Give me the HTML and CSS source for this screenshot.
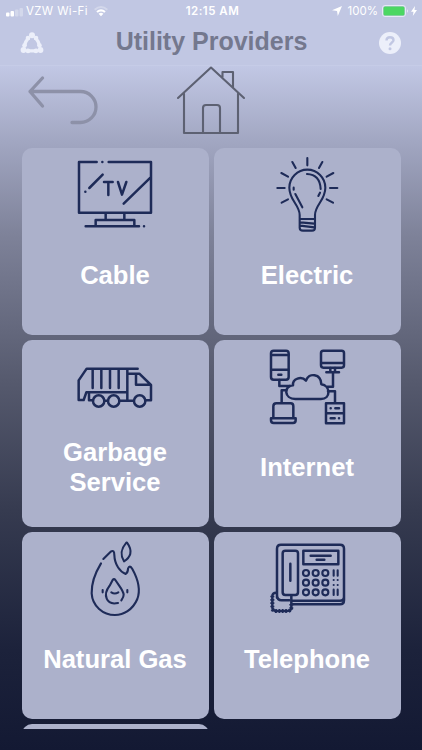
FILE: index.html
```
<!DOCTYPE html>
<html lang="en">

<head>
	<meta charset="utf-8">
	<meta name="viewport" content="width=device-width, initial-scale=1">
	<title>Utility Providers</title>
	<link rel="stylesheet" href="styles.css">
</head>

<body>

	<header>
		<div class="status">
			<div class="status-left">
				<svg class="signal" viewBox="0 0 18 9">
					<rect x="0" y="4.5" width="3.5" height="4" rx="1"/>
					<rect x="4.5" y="3" width="3.5" height="5.5" rx="1"/>
					<rect class="off" x="9" y="1.5" width="3.5" height="7" rx="1"/>
					<rect class="off" x="13.5" y="0" width="3.5" height="8.5" rx="1"/>
				</svg>
				<span class="carrier">VZW Wi-Fi</span>
				<svg class="wifi" viewBox="0 0 14 11">
					<path class="off" d="M0 3Q7-3 14 3L12.600 4.500Q7-.4 1.400 4.500Z"/>
					<path d="M2.300 5.300Q7 1.200 11.700 5.300L10.300 6.800Q7 4 3.700 6.800ZM4.600 7.700Q7 5.900 9.400 7.700L7 10.300Z"/>
				</svg>
			</div>
			<span class="clock">12:15 AM</span>
			<div class="status-right">
				<svg class="location" viewBox="0 0 10 10"><path d="M10 0L5.800 10L5 5L0 4.300Z"/></svg>
				<span class="percent">100%</span>
				<svg class="battery" viewBox="0 0 27 12">
					<rect class="shell" x=".5" y=".5" width="23" height="11" rx="2.500"/>
					<rect class="charge" x="1.500" y="1.500" width="21" height="9" rx="1.500"/>
					<path d="M25 4Q26.500 6 25 8Z"/>
				</svg>
				<svg class="bolt" viewBox="0 0 6 10"><path d="M4 0L0 5.700H2.500L1.800 10L6 4H3.500Z"/></svg>
			</div>
		</div>
		<div class="navbar">
			<svg class="logo" viewBox="0 0 24 22">
				<path d="M9 6Q5 9 4.800 14M15 6Q19 9 19.200 14M7 18.300Q12 19.500 17 18.300"/>
				<circle cx="12" cy="3.200" r="3"/>
				<circle cx="8" cy="6" r="2.300"/>
				<circle cx="16" cy="6" r="2.300"/>
				<circle cx="3.500" cy="18" r="2.900"/>
				<circle cx="20.500" cy="18" r="2.900"/>
				<circle cx="4.500" cy="13.600" r="2.300"/>
				<circle cx="19.500" cy="13.600" r="2.300"/>
				<circle cx="8" cy="18.900" r="2.300"/>
				<circle cx="16" cy="18.900" r="2.300"/>
			</svg>
			<h1>Utility Providers</h1>
			<svg class="help" viewBox="0 0 22 22">
				<circle cx="11" cy="11" r="11"/>
				<path d="M7.500 8.500Q7.500 5.200 11 5.200T14.500 8.200C14.500 10.400 11 10.600 11 13.400"/>
				<circle class="dot" cx="11" cy="16.700" r="1.500"/>
			</svg>
		</div>
	</header>

	<div class="toolbar">
		<svg class="back" viewBox="0 0 72 52"><path d="M15.500 4L3 17.500L15.500 32M3 17.500H53.500A15.500 15.500 0 0 1 53.500 48.500H45"/></svg>
		<svg class="home" viewBox="0 0 70 70"><path d="M2 33L35 2.500L68 33M8 28.500V68H62V28.500M46.500 12V7H57V22M27 68V43Q27 40 30 40H41Q44 40 44 43V68"/></svg>
	</div>

	<main>
		<section class="card">
			<svg class="icon" viewBox="45 24 240 240">
				<path d="M110 51H57V203H273V51H146M127 51h.1M88 129L128 89M76 140h.1M191 176L272 97M137 204V224M193 204V224M107 242V225H223V242M77 244H237M252 244h.1"/>
				<path d="M132 111H158M145 112V150M174 111L186 149L199 111"/>
			</svg>
			<h2>Cable</h2>
		</section>
		<section class="card">
			<svg class="icon" viewBox="21 24 240 240">
				<path class="thin" d="M119 222V210C119 180 88 166 88 128A54 54 0 0 1 196 128C196 166 165 180 165 210V222M119 222H165V248Q165 257 156 257H129Q119 257 119 248ZM121 232L163 236M121 242L163 247"/>
				<path class="thin" d="M142 39V61M97 51L107 69M187 51L177 69M64 84L84 95M220 84L200 95M52 129H74M232 129H210M65 173L84 163M219 173L200 163M141 87Q180 89 182 132M180 143L175 153M101 128V134M106 147L127 187"/>
			</svg>
			<h2>Electric</h2>
		</section>
		<section class="card">
			<svg class="icon" viewBox="45 -15 240 240">
				<path d="M233 56H80L56 91V150H71L79 127H200M98 57V114M124 57V114M150 57V114M176 57V114M202 57V152M203 71H238L273 105V151H258M228 73V104H272M87 128V151H99M133 152H144M178 152H220"/>
				<circle cx="116" cy="153" r="17"/>
				<circle cx="161" cy="153" r="17"/>
				<circle cx="239" cy="153" r="17"/>
			</svg>
			<h2>Garbage<br>Service</h2>
		</section>
		<section class="card">
			<svg class="icon" viewBox="21 15 240 240">
				<rect x="33" y="32" width="53" height="87" rx="8"/>
				<path d="M34 45H85M34 89H85M55 104H64M58 120V138H90M65 188V151H79M219 98V140H202M204 154H225V188"/>
				<rect x="183" y="32" width="69" height="51" rx="7"/>
				<path d="M184 69H251M211 84V97M225 84V97M199 97H237"/>
				<path d="M106 177C72 177 70 137 99 136C97 116 124 107 138 122C146 97 183 100 184 133C212 137 213 177 183 177Z"/>
				<path d="M40 234V199Q40 190 49 190H92Q100 190 100 199V234M33 235H107V241Q107 249 99 249H41Q33 249 33 241Z"/>
				<path d="M198 190H252V250H198ZM198 220H252M212 205h.1M226 205H237M212 235H224M237 235h.1"/>
			</svg>
			<h2>Internet</h2>
		</section>
		<section class="card">
			<svg class="icon" viewBox="15 21 240 240">
				<path class="thin" d="M100 87L122 65Q133 58 133 75C134 105 151 126 167 132Q174 127 174 116Q179 103 187 117C207 153 212 180 202 207C188 240 160 255 135 255C99 255 67 228 65 190C64 154 79 123 93 100"/>
				<path class="thin" d="M169 38C157 52 147 69 162 94C180 83 191 65 171 38ZM144 219C108 227 98 194 119 167L128 150Q132 145 136 150L147 166C166 193 163 198 154 211M98 180V187M172 180V187M124 187Q134 194 145 187"/>
			</svg>
			<h2>Natural Gas</h2>
		</section>
		<section class="card">
			<svg class="icon" viewBox="21 21 240 240">
				<path d="M51 203V56Q51 44 63 44H240Q252 44 252 56V211Q252 223 240 223H97M97 212H240Q252 212 252 200M51 195Q51 211 65 211H88"/>
				<rect x="68" y="62" width="46" height="133" rx="8"/>
				<path d="M91 101V152M130 62H235V103H130ZM152 77H212M170 89H193"/>
				<g class="keys">
					<circle cx="138" cy="129" r="9"/>
					<circle cx="167" cy="129" r="9"/>
					<circle cx="196" cy="129" r="9"/>
					<circle cx="138" cy="158" r="9"/>
					<circle cx="167" cy="158" r="9"/>
					<circle cx="196" cy="158" r="9"/>
					<circle cx="138" cy="187" r="9"/>
					<circle cx="167" cy="187" r="9"/>
					<circle cx="196" cy="187" r="9"/>
				</g>
				<path class="thin" d="M221 121V137M233 121V137M221 150h.1M233 150h.1M221 165h.1M233 165h.1M221 179V195M233 179V195"/>
				<path d="M49 188Q37 188 37 199V232Q37 243 48 243H82Q94 243 94 232V197"/>
				<path class="cord" d="M37 197V232Q37 243 48 243H82Q94 243 94 232V222"/>
			</svg>
			<h2>Telephone</h2>
		</section>
		<section class="card"></section>
	</main>

</body>
</html>
```
FILE: styles.css
```
* {
	box-sizing: border-box;
}

body {
	margin: 0;
	height: 750px;
	overflow: hidden;
	font-family: "Liberation Sans", Arial, sans-serif;
	background: linear-gradient(#c2c8e5 65px, #a0a5c0 145px, #7e8299 235px, #565a6e 380px, #363b50 510px, #1c223b 650px, #131933 750px);
}

h1,
h2 {
	margin: 0;
	font-weight: bold;
}

svg {
	display: block;
	flex: none;
}

header {
	height: 66px;
	color: #fff;
	background: #c1c7e3;
	border-bottom: 1px solid #c6cce7;
}

.status {
	display: grid;
	grid-template-columns: 1fr auto 1fr;
	align-items: center;
	height: 22px;
	padding: 0 5px 0 6px;
	font-family: Inter, sans-serif;
	font-size: 11.5px;
	fill: #fff;
}

.status-left,
.status-right {
	display: flex;
	align-items: center;
}

.status-right {
	justify-content: flex-end;
}

.signal {
	width: 18px;
	height: 9px;
	margin-top: 2px;
}

.off {
	opacity: 0.3;
}

.carrier {
	margin-left: 2px;
	letter-spacing: 0.35px;
}

.wifi {
	width: 14px;
	height: 11px;
	margin-left: 6px;
}

.clock {
	padding-left: 2px;
	font-weight: 600;
	letter-spacing: 0.5px;
}

.location {
	width: 10px;
	height: 10px;
	margin-right: 6px;
}

.battery {
	width: 27px;
	height: 12px;
	margin-left: 4px;
}

.shell {
	fill: none;
	stroke: #e6e9f6;
}

.charge {
	fill: #4bd763;
}

.bolt {
	width: 6px;
	height: 10px;
	margin-left: 2px;
}

.navbar {
	display: flex;
	align-items: center;
	justify-content: space-between;
	height: 38px;
	padding: 0 21px 0 20px;
}

.navbar h1 {
	color: #74788e;
	font-size: 25px;
	line-height: 38px;
}

.logo {
	width: 24px;
	height: 22px;
	margin-top: 4px;
	fill: #eceffa;
}

.logo path {
	fill: none;
	stroke: #eceffa;
	stroke-width: 3.4;
}

.help {
	width: 22px;
	height: 22px;
	margin-top: 4px;
	fill: #eceffa;
}

.help path {
	fill: none;
	stroke: #c1c7e3;
	stroke-width: 2.4;
}

.help .dot {
	fill: #c1c7e3;
}

.toolbar {
	display: flex;
	height: 82px;
	padding-left: 27px;
	fill: none;
	stroke-linecap: round;
	stroke-linejoin: round;
}

.back {
	width: 72px;
	height: 52px;
	margin-top: 8px;
	stroke: #8d91a8;
	stroke-width: 3.3;
}

.home {
	width: 70px;
	height: 70px;
	margin-left: 77px;
	margin-top: -1px;
	stroke: #5d6172;
	stroke-width: 2.1;
}

main {
	display: grid;
	grid-template-columns: 187px 187px;
	grid-auto-rows: 187px;
	gap: 5px;
	height: 581px;
	padding-left: 21.5px;
	overflow: hidden;
}

.card {
	display: flex;
	flex-direction: column;
	align-items: center;
	padding-top: 5px;
	border-radius: 10px;
	background: #acb1cb;
}

.card h2 {
	display: flex;
	align-items: center;
	height: 83px;
	color: #fff;
	font-size: 25.6px;
	line-height: 30px;
	text-align: center;
}

.icon {
	width: 80px;
	height: 80px;
	fill: none;
	stroke: #1e2b58;
	stroke-width: 7.5;
	stroke-linecap: round;
	stroke-linejoin: round;
}

.icon .thin {
	stroke-width: 6.3;
}

.keys {
	stroke-width: 6.5;
}

.icon .cord {
	stroke-width: 12;
	stroke-linecap: butt;
	stroke-dasharray: 5 5;
}
```
